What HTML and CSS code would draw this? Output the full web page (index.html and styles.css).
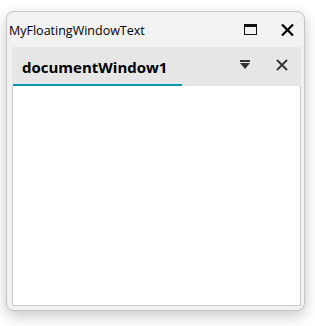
FILE: index.html
```html
<!DOCTYPE html>
<html>
<head>
<meta charset="utf-8">
<link rel="stylesheet" href="styles.css">
</head>
<body>
<div class="window">
  <div class="titlebar">
    <span class="title">MyFloatingWindowText</span>
    <div class="title-buttons">
      <svg class="icon-max" width="13" height="11" viewBox="0 0 13 11">
        <rect x="0.5" y="0.5" width="12" height="10" fill="none" stroke="#111" stroke-width="1"/>
        <rect x="0" y="0" width="13" height="3" fill="#111"/>
      </svg>
      <svg class="icon-close" width="13" height="12" viewBox="0 0 13 12">
        <path d="M1 0.5 L12 11.5 M12 0.5 L1 11.5" stroke="#000" stroke-width="2.2" fill="none"/>
      </svg>
    </div>
  </div>
  <div class="doc">
    <div class="tabstrip">
      <div class="tab"><span class="tab-label">documentWindow1</span></div>
      <div class="tab-buttons">
        <svg class="icon-menu" width="10" height="9" viewBox="0 0 10 9">
          <rect x="0" y="0" width="10" height="2" fill="#333"/>
          <path d="M0 3 L10 3 L5 9 Z" fill="#333"/>
        </svg>
        <svg class="icon-tabclose" width="12" height="12" viewBox="0 0 12 12">
          <path d="M1 1 L11 11 M11 1 L1 11" stroke="#333" stroke-width="1.8" fill="none"/>
        </svg>
      </div>
    </div>
    <div class="content"></div>
  </div>
</div>
</body>
</html>
```

FILE: styles.css
```css
html, body {
  margin: 0;
  padding: 0;
  background: #ffffff;
}
body {
  width: 315px;
  height: 326px;
  overflow: hidden;
  font-family: "Open Sans", "Noto Sans", sans-serif;
}
.window {
  margin: 11px 0 0 6px;
  width: 297px;
  height: 298px;
  border: 1px solid #c6c6c6;
  border-radius: 8px;
  background: #f2f2f2;
  box-shadow: 0 5px 14px rgba(0, 0, 0, 0.22);
  display: flex;
  flex-direction: column;
  box-sizing: content-box;
}
.titlebar {
  height: 35px;
  display: flex;
  align-items: center;
  justify-content: space-between;
  padding: 0 10px 0 2px;
}
.title {
  font-size: 12.5px;
  color: #000;
  margin-top: 1px;
}
.title-buttons {
  display: flex;
  align-items: center;
  gap: 24px;
}
.title-buttons svg { display: block; }
.doc {
  flex: 1;
  display: flex;
  flex-direction: column;
  margin: 0 3px 4px 5px;
}
.tabstrip {
  height: 39px;
  background: #e6e6e6;
  display: flex;
  justify-content: space-between;
  align-items: stretch;
}
.tab {
  width: 169px;
  margin-left: 1px;
  border-bottom: 2px solid #0b96b0;
  box-sizing: border-box;
  display: flex;
  align-items: center;
  padding-left: 9px;
}
.tab-label {
  font-weight: 700;
  font-size: 15px;
  color: #000;
  margin-top: 2px;
}
.tab-buttons {
  display: flex;
  align-items: center;
  gap: 26px;
  padding-right: 13px;
  padding-bottom: 4px;
}
.tab-buttons svg { display: block; }
.content {
  flex: 1;
  background: #ffffff;
  border: 1px solid #c8c8c8;
  border-top: none;
}
```
